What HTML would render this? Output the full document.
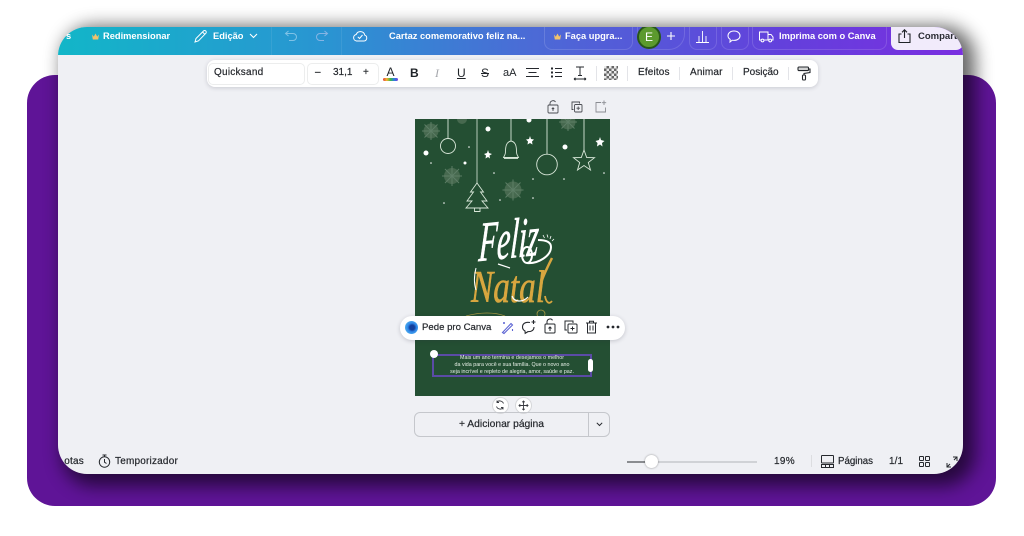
<!DOCTYPE html>
<html lang="pt">
<head>
<meta charset="utf-8">
<title>Canva</title>
<style>
html,body{margin:0;padding:0;background:#fff}
body{position:relative;width:1024px;height:536px;overflow:hidden;font-family:"Liberation Sans",sans-serif;color:#1f2328}
.a{position:absolute;white-space:nowrap}
#purple{left:27px;top:75px;width:969px;height:431px;border-radius:28px;background:#5f1497}
#shadow{left:62px;top:26px;width:913px;height:460px;border-radius:32px;background:#000;opacity:.6;filter:blur(9px)}
#win{left:58px;top:27px;width:905px;height:447px;border-radius:29px;background:#eff0f4;overflow:hidden}
#bar{left:0;top:0;width:905px;height:28px;background:linear-gradient(90deg,#12b6c8 0,#2a94d2 30%,#4b6bd6 52%,#6340dc 80%,#7a2fe0 100%)}
.w{color:#fff;font-size:9.3px;font-weight:bold;top:31px;line-height:11px}
.t{font-size:10px;line-height:10px;color:#25282d;-webkit-text-stroke:.2px #25282d}
.sep{position:absolute;width:1px;background:#e3e4e8}
.bsep{position:absolute;width:1px;height:28px;top:27px;background:rgba(255,255,255,.08)}
.pill{position:absolute;border:1px solid rgba(255,255,255,.14);border-top:0;border-radius:0 0 8px 8px;height:22px;top:27px}
svg{position:absolute;overflow:visible}
#tb{left:207px;top:60px;width:611px;height:27px;background:#fff;border-radius:8px;box-shadow:0 1px 4px rgba(50,50,70,.2)}
.box{position:absolute;border:1px solid #eceded;border-radius:5px;height:20px;top:63px;background:#fff}
#card{left:415px;top:119px;width:195px;height:277px;background:#244f33;overflow:hidden}
#ask{left:400px;top:316px;width:225px;height:24px;background:#fff;border-radius:12px;box-shadow:0 1px 4px rgba(40,40,60,.22)}
.circ{position:absolute;width:15px;height:15px;border-radius:50%;background:#fff;border:1px solid #d6d7da;box-sizing:content-box}
</style>
</head>
<body>
<div class="a" id="purple"></div>
<div class="a" id="shadow"></div>
<div class="a" id="win">
  <div class="a" id="bar"></div>
  <div class="a" style="left:833px;top:0;width:72px;height:23px;background:#f1ebfb;border-radius:0 0 7px 7px"></div>
  <div class="a" style="left:860px;top:4px;font-size:9.500px;line-height:11px;font-weight:bold;color:#2a2c33">Compartilhar</div>
</div>

<!-- top bar -->
<div class="a w" style="left:66px">s</div>
<svg style="left:91px;top:32px" width="9" height="9" viewBox="0 0 9 9"><path d="M1 2.500 2.800 4.600 4.500 1.500 6.200 4.600 8 2.500 7.200 7.500H1.800Z" fill="#f1c26b"/></svg>
<div class="a w" style="left:103px">Redimensionar</div>
<svg style="left:193px;top:29px" width="15" height="15" viewBox="0 0 15 15" fill="none" stroke="#fff" stroke-width="1"><path d="M2 13 3 9.500 10.500 2a1.500 1.500 0 0 1 2.300 2.300L5.500 11.800 2 13ZM9.500 3 12 5.500"/></svg>
<div class="a w" style="left:213px">Edição</div>
<svg style="left:249px;top:33px" width="9" height="6" viewBox="0 0 9 6" fill="none" stroke="#fff" stroke-width="1.100"><path d="M1 1 4.500 4.500 8 1"/></svg>
<div class="bsep" style="left:271px"></div>
<svg style="left:284px;top:30px" width="14" height="12" viewBox="0 0 14 12" fill="none" stroke="#7fc2e6" stroke-width="1"><path d="M4.500 1 1.500 3.500 4.500 6M1.500 3.500H9a3 3 0 0 1 0 7H5"/></svg>
<svg style="left:315px;top:30px" width="14" height="12" viewBox="0 0 14 12" fill="none" stroke="#85b4e4" stroke-width="1"><path d="M9.500 1 12.500 3.500 9.500 6M12.500 3.500H5a3 3 0 0 0 0 7H9"/></svg>
<div class="bsep" style="left:341px"></div>
<svg style="left:352px;top:29px" width="16" height="14" viewBox="0 0 16 14" fill="none" stroke="#fff" stroke-width="1"><path d="M4.500 12H12a3 3 0 0 0 .8-5.800A4.500 4.500 0 0 0 4.200 5.500 3.300 3.300 0 0 0 4.500 12Z"/><path d="M5.800 7.800 7.500 9.500 10.500 6"/></svg>
<div class="a w" style="left:389px">Cartaz comemorativo feliz na...</div>
<div class="pill" style="left:544px;width:87px"></div>
<svg style="left:553px;top:32px" width="9" height="9" viewBox="0 0 9 9"><path d="M1 2.500 2.800 4.600 4.500 1.500 6.200 4.600 8 2.500 7.200 7.500H1.800Z" fill="#f1c26b"/></svg>
<div class="a w" style="left:565px">Faça upgra...</div>
<div class="pill" style="left:637px;width:46px;border-radius:0 0 16px 16px;height:22px"></div>
<div class="a" style="left:637px;top:25px;width:24px;height:24px;border-radius:50%;background:#5c9a2e;border:2px solid #28561b;box-sizing:border-box;color:#fff;font-size:12px;line-height:20px;text-align:center;clip-path:inset(2px 0 0 0)">E</div>
<svg style="left:666px;top:31px" width="10" height="10" viewBox="0 0 10 10" stroke="#fff" stroke-width="1.100"><path d="M5 1V9M1 5H9"/></svg>
<div class="pill" style="left:689px;width:26px"></div>
<svg style="left:695px;top:29px" width="15" height="15" viewBox="0 0 15 15" fill="none" stroke="#fff" stroke-width=".9"><path d="M1 13.500H14M7.500 2V13.500M4 7V13.500M11 7V13.500"/></svg>
<div class="pill" style="left:721px;width:26px"></div>
<svg style="left:726px;top:29px" width="16" height="15" viewBox="0 0 16 15" fill="none" stroke="#fff" stroke-width="1"><path d="M8 2c3.500 0 6 2 6 4.700s-2.500 4.700-6 4.700c-.7 0-1.200 0-1.800-.2L4 13l.2-2.700C2.800 9.500 2 8.200 2 6.700 2 4 4.500 2 8 2Z"/></svg>
<div class="pill" style="left:752px;width:133px"></div>
<svg style="left:758px;top:30px" width="16" height="13" viewBox="0 0 16 13" fill="none" stroke="#fff" stroke-width="1"><path d="M3 10H1.500V2H10V10H6M10 4.500H13L15 7V10H13.500M10 10H11"/><circle cx="4.500" cy="10.500" r="1.400"/><circle cx="12.200" cy="10.500" r="1.400"/></svg>
<div class="a w" style="left:779px">Imprima com o Canva</div>
<svg style="left:897px;top:28px" width="15" height="16" viewBox="0 0 15 16" fill="none" stroke="#1f2328" stroke-width="1.100"><path d="M4.500 6H2V14.500H13V6H10.500M7.500 10V2M5 4.300 7.500 1.800 10 4.300"/></svg>

<!-- format toolbar -->
<div class="a" id="tb"></div>
<div class="box" style="left:208px;width:95px"></div>
<div class="a t" style="left:214px;top:68px;letter-spacing:.25px">Quicksand</div>
<div class="box" style="left:307px;width:70px"></div>
<div class="a t" style="left:315px;top:68px">–</div>
<div class="a t" style="left:333px;top:68px">31,1</div>
<div class="a t" style="left:363px;top:68px">+</div>
<div class="a" style="left:385px;top:66px;font-size:12px;line-height:12px;width:11px;text-align:center">A</div>
<div class="a" style="left:383px;top:78px;width:15px;height:3px;border-radius:2px;background:linear-gradient(90deg,#e23b3b,#f3b62f,#3cb54a,#2a7fe0,#7a3be0)"></div>
<div class="a" style="left:410px;top:67px;font-size:12px;line-height:12px;font-weight:bold">B</div>
<div class="a" style="left:435px;top:67px;font-size:12px;line-height:12px;font-style:italic;color:#a6a8ad;font-family:'Liberation Serif',serif">I</div>
<div class="a" style="left:457px;top:67px;font-size:12px;line-height:12px;text-decoration:underline">U</div>
<div class="a" style="left:481px;top:67px;font-size:12px;line-height:12px;text-decoration:line-through">S</div>
<div class="a" style="left:503px;top:68px;font-size:11px;line-height:11px">aA</div>
<svg style="left:526px;top:67px" width="13" height="12" viewBox="0 0 13 12" stroke="#25282d" stroke-width="1"><path d="M0 1.500H13M2.500 5.500H10.500M0 9.500H13"/></svg>
<svg style="left:550px;top:67px" width="13" height="12" viewBox="0 0 13 12" stroke="#25282d" stroke-width="1"><path d="M5 1.500H12M5 5.500H12M5 9.500H12"/><path d="M1 1.500H3M1 5.500H3M1 9.500H3" stroke-width="2"/></svg>
<svg style="left:573px;top:66px" width="14" height="15" viewBox="0 0 14 15" fill="none" stroke="#25282d" stroke-width="1"><path d="M3 1H11M7 1V9.500M5 9.500H9M1 13H13M1 13 2.500 11.800M1 13 2.500 14.200M13 13 11.500 11.800M13 13 11.500 14.200"/></svg>
<div class="sep" style="left:596px;top:66px;height:15px"></div>
<div class="a" style="left:604px;top:66px;width:14px;height:14px;background-image:repeating-conic-gradient(#333 0 25%,#e5e5e5 0 50%);background-size:5px 5px;opacity:.75"></div>
<div class="sep" style="left:627px;top:66px;height:15px"></div>
<div class="a t" style="left:638px;top:68px;letter-spacing:.15px">Efeitos</div>
<div class="sep" style="left:679px;top:67px;height:13px"></div>
<div class="a t" style="left:690px;top:68px;letter-spacing:.15px">Animar</div>
<div class="sep" style="left:732px;top:67px;height:13px"></div>
<div class="a t" style="left:743px;top:68px">Posição</div>
<div class="sep" style="left:788px;top:67px;height:13px"></div>
<svg style="left:797px;top:66px" width="14" height="15" viewBox="0 0 14 15" fill="none" stroke="#25282d" stroke-width="1.100"><rect x="1" y="1" width="10.500" height="3.600" rx="1" fill="#25282d" fill-opacity=".2"/><path d="M11.500 3H13V6.500L7 7.500V9"/><rect x="5.500" y="9" width="3" height="5" rx="1"/></svg>

<!-- page actions -->
<svg style="left:547px;top:100px" width="12" height="14" viewBox="0 0 12 14" fill="none" stroke="#4a4c52" stroke-width=".9"><rect x="1" y="5" width="10" height="8" rx="1"/><path d="M3 5V3.500a3 3 0 0 1 5.500-1.500M6 11V8M4.800 9 6 7.800 7.200 9"/></svg>
<svg style="left:571px;top:101px" width="12" height="12" viewBox="0 0 12 12" fill="none" stroke="#4a4c52" stroke-width=".9"><path d="M2.500 8.500H1V1H8.500V2.500"/><rect x="3.500" y="3.500" width="7.500" height="7.500" rx="1"/><path d="M7.200 5.500V9M5.500 7.200H9"/></svg>
<svg style="left:595px;top:100px" width="12" height="13" viewBox="0 0 12 13" fill="none" stroke="#8a8c92" stroke-width=".9"><path d="M6 2.500H1V12H10.500V7.500M9 .5V5M6.800 2.700H11.200"/></svg>

<!-- poster -->
<div class="a" id="card">
<svg style="left:0;top:0" width="195" height="277" viewBox="415 119 195 277">
 <g fill="none" stroke="#5d7e66" stroke-width="1">
  <g transform="translate(431,131)"><circle r="7.500" fill="#47694f" stroke="none"/><path d="M-9 0H9M0-9V9M-6.500-6.500 6.500 6.500M-6.500 6.500 6.500-6.500"/></g>
  <g transform="translate(452,176)"><circle r="8" fill="#47694f" stroke="none"/><path d="M-10 0H10M0-10V10M-7-7 7 7M-7 7 7-7"/></g>
  <g transform="translate(513,190)"><circle r="8.500" fill="#47694f" stroke="none"/><path d="M-10.500 0H10.500M0-10.500V10.500M-7.500-7.500 7.500 7.500M-7.500 7.500 7.500-7.500"/></g>
  <g transform="translate(568,122)"><circle r="7.500" fill="#47694f" stroke="none"/><path d="M-9 0H9M0-9V9M-6.500-6.500 6.500 6.500M-6.500 6.500 6.500-6.500"/></g>
  <g transform="translate(462,119)"><circle r="5" fill="#47694f" stroke="none"/></g>
 </g>
 <g fill="none" stroke="#d9e7d9" stroke-width=".9">
  <path d="M448 119V138"/><circle cx="448" cy="146" r="7.500"/>
  <path d="M477 119V183" stroke="#c5d6c7"/><path d="M477 183 470.500 192H473.500L467 201H472L466 208H488L482 201H487L480.500 192H483.500ZM474.500 208V211.500H480V208"/>
  <path d="M511 119V141"/><path d="M511 141C506 142 505.500 147 505.500 152 505.500 155 504 156 503.500 157.500H518.500C518 156 516.500 155 516.500 152 516.500 147 516 142 511 141Z"/><path d="M504 158.500H518"/>
  <path d="M547 119V154"/><circle cx="547" cy="164.500" r="10.300"/>
  <path d="M584 119V150"/><path d="M584 150 586.700 157.500 594.500 157.700 588.300 162.500 590.500 170 584 165.500 577.500 170 579.700 162.500 573.500 157.700 581.300 157.500Z"/>
 </g>
 <g fill="#fff">
  <circle cx="426" cy="153" r="2.500"/><circle cx="465" cy="163" r="1.500"/><circle cx="488" cy="129" r="2.500"/><circle cx="529" cy="120" r="2.500"/><circle cx="565" cy="147" r="2.500"/>
  <circle cx="469" cy="147" r=".8"/><circle cx="431" cy="163" r=".8"/><circle cx="494" cy="173" r=".8"/><circle cx="533" cy="179" r=".8"/><circle cx="564" cy="179" r=".8"/><circle cx="604" cy="173" r=".8"/><circle cx="500" cy="200" r=".8"/><circle cx="533" cy="198" r=".8"/><circle cx="444" cy="203" r=".8"/>
  <path d="M488 150 489 153 492 154 489.500 155.500 490 158.500 488 157 485.500 158.500 486 155.500 484 154 487 153Z"/>
  <path d="M530 136 531 139 534 139.500 532 141.500 532.500 144.500 530 143 527.500 144.500 528 141.500 526 139.500 529 139Z"/>
  <path d="M600 137 601 140 604.500 141 602 143 602.500 146.500 600 144.500 597 146.500 597.500 143 595.500 141 599 140Z"/>
 </g>
 <text transform="translate(508 258) rotate(-6) skewX(-9)" x="0" y="0" text-anchor="middle" font-family="'Liberation Serif',serif" font-style="italic" font-size="56" fill="#fff" stroke="#fff" stroke-width=".7" textLength="60" lengthAdjust="spacingAndGlyphs">Feliz</text>
 <ellipse cx="527" cy="255" rx="5" ry="8" fill="none" stroke="#fff" stroke-width="2"/>
 <path d="M527 263C538 264 551 256 551 247 551 241 544 240 538 240" fill="none" stroke="#fff" stroke-width="2"/>
 <path d="M543 235 544.500 238M547 234.500 548 237.500M551 236 550 239M554 239 552 241" stroke="#fff" stroke-width=".8"/>
 <text x="508" y="302" text-anchor="middle" font-family="'Liberation Serif',serif" font-style="italic" font-size="45" fill="#d8a63f" stroke="#d8a63f" stroke-width=".6" textLength="74" lengthAdjust="spacingAndGlyphs">Natal</text>
 <path d="M552 258C548 266 545 272 542 280" fill="none" stroke="#d8a63f" stroke-width="2.500"/>
 <path d="M545 296C546 302 549 305 552 301" fill="none" stroke="#d8a63f" stroke-width="1.800"/>
 <path d="M476 268C474 276 474 284 476 290" fill="none" stroke="#fff" stroke-width="1"/>
 <path d="M498 264 510 268" stroke="#fff" stroke-width="1.200"/>
 <path d="M512 296C514 302 522 303 528 297" fill="none" stroke="#fff" stroke-width="1.200"/>
 <path d="M466 316C480 312 495 312 505 316" fill="none" stroke="#a99a43" stroke-width=".8"/>
 <circle cx="541" cy="314" r="4" fill="none" stroke="#a99a43" stroke-width=".8"/>
</svg>
</div>
<div class="a" style="left:433px;top:355px;width:156px;height:19px;border:2px solid #5b4ba6;box-sizing:content-box;margin:-1px 0 0 -1px"></div>
<div class="a" style="left:434px;top:355px;width:156px;text-align:center;color:#e6efe6;font-size:5.350px;line-height:7.200px;white-space:normal">Mais um ano termina e desejamos o melhor<br>da vida para você e sua família. Que o novo ano<br>seja incrível e repleto de alegria, amor, saúde e paz.</div>
<div class="a" style="left:430px;top:350px;width:8px;height:8px;border-radius:50%;background:#fff"></div>
<div class="a" style="left:588px;top:359px;width:5px;height:13px;border-radius:3px;background:#fff"></div>

<!-- Ask bar -->
<div class="a" id="ask"></div>
<div class="a" style="left:405px;top:321px;width:13px;height:13px;border-radius:50%;background:radial-gradient(circle at 55% 50%,#123f9c 0 25%,#2f86e8 45%,#66cdf0 100%)"></div>
<div class="a t" style="left:422px;top:323px;font-size:9.600px;letter-spacing:0">Pede pro Canva</div>
<svg style="left:501px;top:320px" width="14" height="14" viewBox="0 0 14 14" fill="none" stroke="#5b63d3" stroke-width="1.100"><path d="M1.500 12.500 10 3.500 11.500 5 3 13.500ZM3 2V4M2 3H4M11.500 9V11"/></svg>
<svg style="left:521px;top:319px" width="16" height="16" viewBox="0 0 16 16" fill="none" stroke="#25282d" stroke-width="1.100"><path d="M9 3.500C4 2.500 1.500 5 1.500 8c0 2 1.200 3.300 2.500 4l.2 2.300L7 12.600c3.500.3 6-1.500 6-4.600M12.500 1V5M10.500 3H14.500"/></svg>
<svg style="left:544px;top:318px" width="12" height="16" viewBox="0 0 12 16" fill="none" stroke="#25282d" stroke-width="1"><rect x="1" y="6" width="10" height="9" rx="1"/><path d="M3 6V4a3 3 0 0 1 5.500-1.700M6 13V9M4.500 10.500 6 9 7.500 10.500"/></svg>
<svg style="left:564px;top:320px" width="14" height="14" viewBox="0 0 14 14" fill="none" stroke="#25282d" stroke-width="1"><path d="M3 10H1V1H9V3"/><rect x="4" y="4" width="9" height="9" rx="1"/><path d="M8.500 6.500V10.500M6.500 8.500H10.500"/></svg>
<svg style="left:585px;top:320px" width="13" height="14" viewBox="0 0 13 14" fill="none" stroke="#25282d" stroke-width="1"><path d="M1 3H12M4.500 3V1.200H8.500V3M2.500 3V13H10.500V3M5 5.500V10.500M8 5.500V10.500"/></svg>
<svg style="left:606px;top:325px" width="14" height="4" viewBox="0 0 14 4" fill="#25282d"><circle cx="2" cy="2" r="1.400"/><circle cx="7" cy="2" r="1.400"/><circle cx="12" cy="2" r="1.400"/></svg>

<!-- rotate / move -->
<div class="circ" style="left:492px;top:397px"></div>
<svg style="left:495px;top:400px" width="10" height="10" viewBox="0 0 10 10" fill="none" stroke="#3a3c42" stroke-width=".9"><path d="M8.500 3.500A4 4 0 0 0 2 2M1.500 6.500A4 4 0 0 0 8 8M2 .5V2.500H4M8 9.500V7.500H6"/></svg>
<div class="circ" style="left:515px;top:397px"></div>
<svg style="left:518px;top:400px" width="11" height="11" viewBox="0 0 11 11" fill="none" stroke="#3a3c42" stroke-width=".9"><path d="M5.500 1V10M1 5.500H10M4.300 2.200 5.500 1 6.700 2.200M4.300 8.800 5.500 10 6.700 8.800M2.200 4.300 1 5.500 2.200 6.700M8.800 4.300 10 5.500 8.800 6.700"/></svg>

<!-- add page -->
<div class="a" style="left:414px;top:412px;width:194px;height:23px;border:1px solid #c5c7cc;border-radius:6px;box-sizing:content-box"></div>
<div class="a" style="left:588px;top:413px;width:1px;height:23px;background:#c5c7cc"></div>
<div class="a t" style="left:459px;top:420px;font-size:10.300px">+ Adicionar página</div>
<svg style="left:596px;top:422px" width="7" height="5" viewBox="0 0 7 5" fill="none" stroke="#25282d" stroke-width="1"><path d="M.8 .8 3.500 3.500 6.200 .8"/></svg>

<!-- footer -->
<div class="a t" style="left:64px;top:457px;width:20px;overflow:hidden;text-align:right;letter-spacing:.2px">otas</div>
<svg style="left:98px;top:454px" width="13" height="14" viewBox="0 0 13 14" fill="none" stroke="#25282d" stroke-width="1"><circle cx="6.500" cy="8" r="5.200"/><path d="M4.500 1H8.500M6.500 1V3M6.500 5V8.200L8.500 9.500"/></svg>
<div class="a t" style="left:115px;top:457px;letter-spacing:.2px">Temporizador</div>
<div class="a" style="left:627px;top:461px;width:130px;height:1.500px;background:#d0d2d6"></div>
<div class="a" style="left:627px;top:461px;width:22px;height:1.500px;background:#8a8c90"></div>
<div class="a" style="left:645px;top:455px;width:13px;height:13px;border-radius:50%;background:#fff;box-shadow:0 0 2px rgba(0,0,0,.4)"></div>
<div class="a t" style="left:774px;top:457px;letter-spacing:.3px">19%</div>
<div class="a" style="left:811px;top:455px;width:1px;height:12px;background:#dcdde0"></div>
<svg style="left:821px;top:455px" width="13" height="13" viewBox="0 0 13 13" fill="none" stroke="#25282d" stroke-width="1"><rect x=".5" y=".5" width="12" height="7.500" rx=".6"/><path d="M.5 9.500H12.500V12.500H.5ZM4.500 9.500V12.500M8.500 9.500V12.500"/></svg>
<div class="a t" style="left:838px;top:457px;font-size:9.700px">Páginas</div>
<div class="a t" style="left:889px;top:457px;letter-spacing:.1px">1/1</div>
<svg style="left:919px;top:456px" width="11" height="11" viewBox="0 0 11 11" fill="none" stroke="#25282d" stroke-width="1"><rect x=".5" y=".5" width="4" height="4" rx=".6"/><rect x="6.500" y=".5" width="4" height="4" rx=".6"/><rect x=".5" y="6.500" width="4" height="4" rx=".6"/><rect x="6.500" y="6.500" width="4" height="4" rx=".6"/></svg>
<svg style="left:946px;top:456px" width="12" height="12" viewBox="0 0 12 12" fill="none" stroke="#25282d" stroke-width="1"><path d="M1 7V11H5M11 5V1H7M1 11 4 8M11 1 8 4"/></svg>
</body>
</html>
